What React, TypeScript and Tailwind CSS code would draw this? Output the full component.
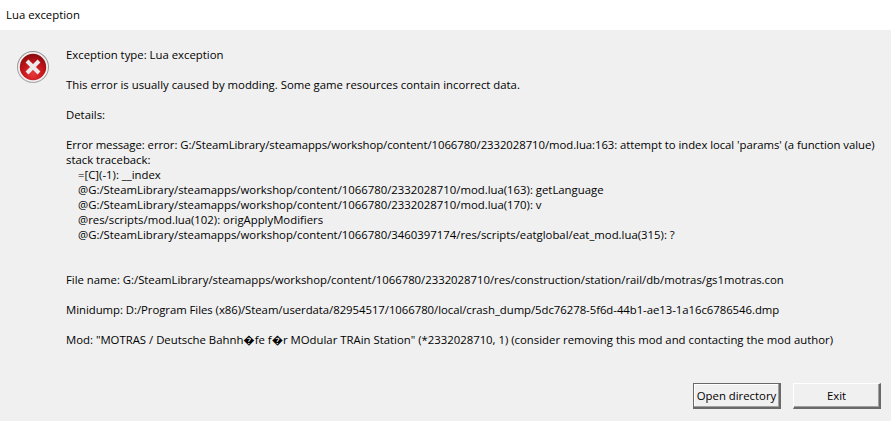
const base = "G:/SteamLibrary/steamapps/workshop/content/1066780";

const traceback = [
  "=[C](-1): __index",
  `@${base}/2332028710/mod.lua(163): getLanguage`,
  `@${base}/2332028710/mod.lua(170): v`,
  "@res/scripts/mod.lua(102): origApplyModifiers",
  `@${base}/3460397174/res/scripts/eatglobal/eat_mod.lua(315): ?`,
];

function ErrorIcon() {
  return (
    <svg width="34" height="34" viewBox="0 0 34 34" className="shrink-0 mt-[3px]">
      <defs>
        <radialGradient id="red" cx="50%" cy="75%" r="70%">
          <stop offset="0%" stopColor="#e8383a" />
          <stop offset="60%" stopColor="#c01418" />
          <stop offset="100%" stopColor="#8e0d10" />
        </radialGradient>
        <linearGradient id="ring" x1="0" y1="0" x2="0" y2="1">
          <stop offset="0%" stopColor="#8f8f8f" />
          <stop offset="100%" stopColor="#a8a8a8" />
        </linearGradient>
      </defs>
      <circle cx="17" cy="17" r="16" fill="url(#ring)" />
      <circle cx="17" cy="17" r="15" fill="#f4f0f0" />
      <circle cx="17" cy="17" r="13.2" fill="url(#red)" />
      <path d="M11 11 L23 23 M23 11 L11 23" stroke="#eeeaea" strokeWidth="4" strokeLinecap="butt" />
    </svg>
  );
}

function DialogButton({ label, primary }: { label: string; primary?: boolean }) {
  return (
    <button
      className={
        "h-[26px] w-[88px] bg-[#f0f0f0] text-black " +
        (primary
          ? "border border-r-2 border-b-2 border-[#696969] shadow-[inset_-1px_-1px_0_#a0a0a0,inset_1px_1px_0_#ffffff]"
          : "border-t border-l border-t-white border-l-white border-r-2 border-b-2 border-r-[#696969] border-b-[#696969] shadow-[inset_-1px_-1px_0_#a0a0a0]")
      }
    >
      {label}
    </button>
  );
}

export default function App() {
  return (
    <div className="h-[421px] w-[891px] flex flex-col overflow-hidden bg-[#f0f0f0] font-['Open_Sans','Noto_Sans',sans-serif] text-[11.35px] leading-[15px] text-black">
      <div className="h-[30px] bg-white pl-[6px] pt-[7px] shrink-0">Lua exception</div>

      <div className="flex flex-1 pl-[16px] pt-[17px]">
        <ErrorIcon />
        <div className="ml-[16px] whitespace-nowrap">
          <p>Exception type: Lua exception</p>
          <p className="mt-[15px]">This error is usually caused by modding. Some game resources contain incorrect data.</p>
          <p className="mt-[15px]">Details:</p>
          <p className="mt-[15px] tracking-[-0.055px]">
            Error message: error: {base}/2332028710/mod.lua:163: attempt to index local 'params' (a function value)
          </p>
          <p>stack traceback:</p>
          <div className="pl-[12px]">
            {traceback.map((line) => (
              <p key={line}>{line}</p>
            ))}
          </div>
          <p className="mt-[30px] tracking-[-0.015px]">File name: {base}/2332028710/res/construction/station/rail/db/motras/gs1motras.con</p>
          <p className="mt-[15px] tracking-[-0.04px]">
            Minidump: D:/Program Files (x86)/Steam/userdata/82954517/1066780/local/crash_dump/5dc76278-5f6d-44b1-ae13-1a16c6786546.dmp
          </p>
          <p className="mt-[15px]">
            Mod: "MOTRAS / Deutsche Bahnh�fe f�r MOdular TRAin Station" (*2332028710, 1) (consider removing this mod and contacting the mod author)
          </p>
        </div>
      </div>

      <div className="flex justify-end gap-[12px] pr-[10px] pb-[12px]">
        <DialogButton label="Open directory" primary />
        <DialogButton label="Exit" />
      </div>
    </div>
  );
}
